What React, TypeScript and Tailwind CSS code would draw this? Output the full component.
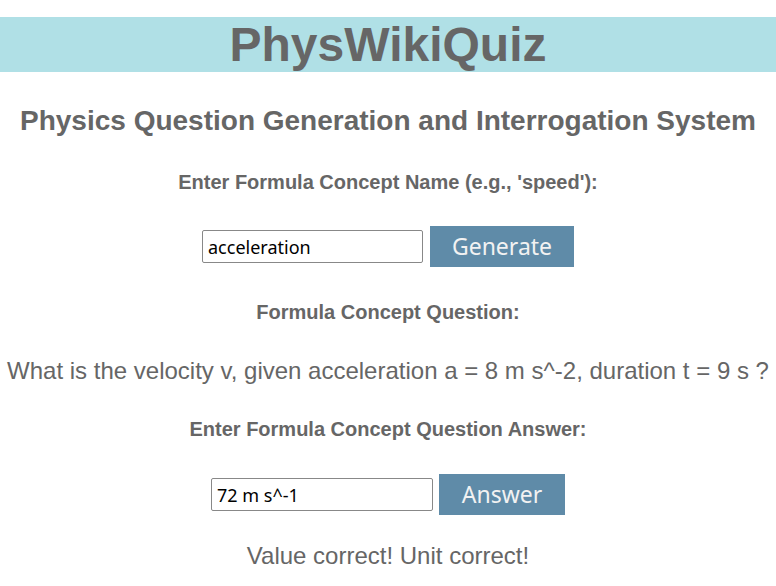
import { useState } from "react";

const Label = ({ children, className = "" }: { children: React.ReactNode; className?: string }) => (
  <p className={`text-[20px] font-bold leading-[24px] text-[#666] ${className}`}>{children}</p>
);

export default function App() {
  const [concept, setConcept] = useState("acceleration");
  const [answer, setAnswer] = useState("72 m s^-1");

  return (
    <div className="min-h-[586px] w-[776px] bg-white text-center font-['Liberation_Sans',Arial,sans-serif] text-[#666]">
      <div className="pt-[17px]">
        <h1 className="h-[55px] bg-[#b0e0e6] text-[48px] font-bold leading-[55px] text-[#666]">
          PhysWikiQuiz
        </h1>
      </div>

      <h2 className="mt-[33px] text-[28px] font-bold leading-[32px]">
        Physics Question Generation and Interrogation System
      </h2>

      <Label className="mt-[33px]">Enter Formula Concept Name (e.g., 'speed'):</Label>

      <div className="mt-[32px] flex items-center justify-center gap-[7px]">
        <input
          value={concept}
          onChange={(e) => setConcept(e.target.value)}
          className="h-[33px] w-[221px] rounded-[2px] border border-[#888] px-[5px] font-['Noto_Sans',sans-serif] text-[18px] text-black outline-none"
        />
        <button className="h-[41px] w-[144px] bg-[#5f8ba8] font-['Noto_Sans',sans-serif] text-[23px] text-[#f2f2f2]">
          Generate
        </button>
      </div>

      <Label className="mt-[33px]">Formula Concept Question:</Label>

      <p className="mt-[33px] text-[24px] leading-[28px]">
        What is the velocity v, given acceleration a = 8 m s^-2, duration t = 9 s ?
      </p>

      <Label className="mt-[32px]">Enter Formula Concept Question Answer:</Label>

      <div className="mt-[33px] flex items-center justify-center gap-[6px]">
        <input
          value={answer}
          onChange={(e) => setAnswer(e.target.value)}
          className="h-[33px] w-[222px] rounded-[2px] border border-[#888] px-[5px] font-['Noto_Sans',sans-serif] text-[18px] text-black outline-none"
        />
        <button className="h-[41px] w-[126px] bg-[#5f8ba8] font-['Noto_Sans',sans-serif] text-[23px] text-[#f2f2f2]">
          Answer
        </button>
      </div>

      <p className="mt-[27px] text-[24px] leading-[28px]">Value correct! Unit correct!</p>
    </div>
  );
}
